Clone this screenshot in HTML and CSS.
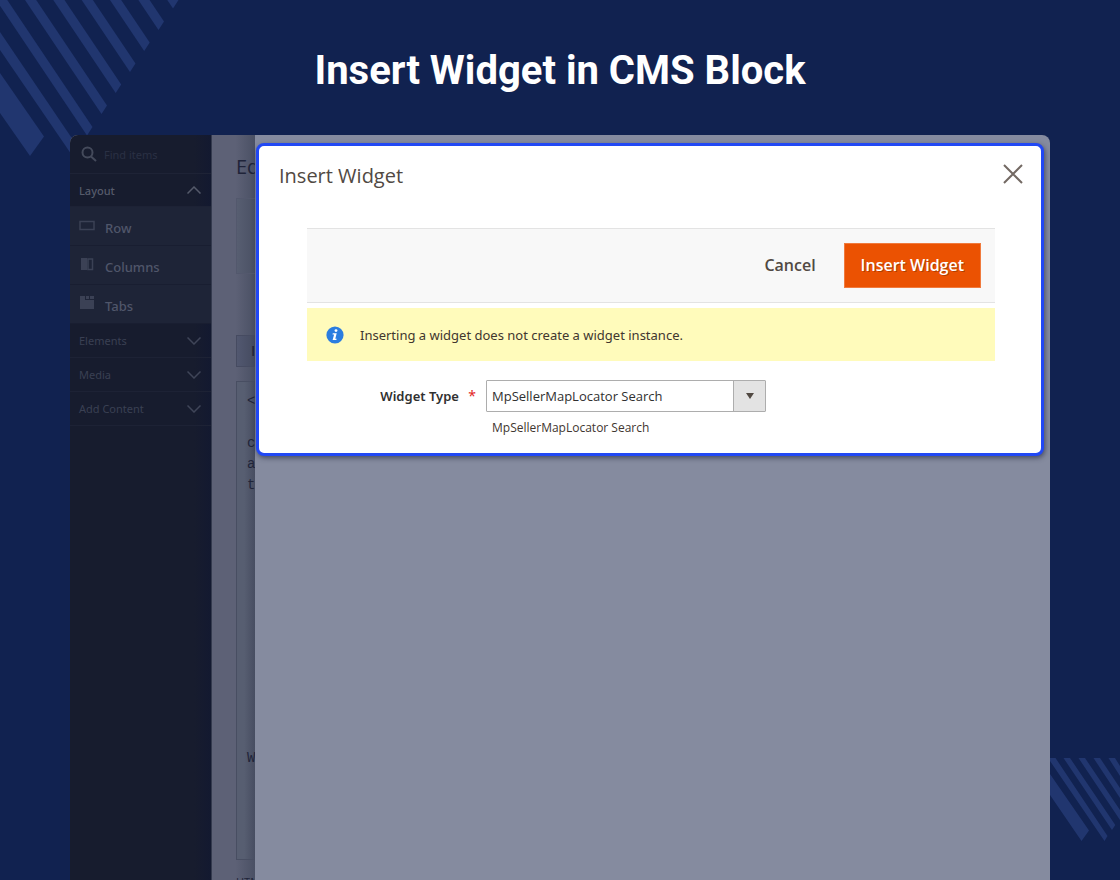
FILE: index.html
```html
<!DOCTYPE html>
<html lang="en">
<head>
<meta charset="utf-8">
<title>Insert Widget in CMS Block</title>
<link rel="stylesheet" href="styles.css">
</head>
<body>
<svg class="stripes stripes-top" viewBox="0 0 180 160" aria-hidden="true">
  <defs><path id="stripe" d="M0 0L-5.5 8.5L-105.5 -140.5L-100 -149Z"/></defs>
  <path d="M0 73L44 136.500L30 156L0 113Z"/>
  <path d="M0 32L78.500 148L72.500 156L0 50Z"/>
  <use href="#stripe" x="92.5" y="127"/>
  <use href="#stripe" x="107" y="105.5"/>
  <use href="#stripe" x="121.2" y="84.5"/>
  <use href="#stripe" x="135.500" y="63.500"/>
  <use href="#stripe" x="149.700" y="42.500"/>
  <use href="#stripe" x="164" y="21.500"/>
  <use href="#stripe" x="178.500" y="0"/>
</svg>
<svg class="stripes stripes-bottom" viewBox="0 0 70 84" aria-hidden="true">
  <path d="M0 16L39 72.5L31.5 83L0 37ZM0 0H5.500L57.500 78L54.500 83L0 3ZM13.500 0H20L65.300 67L62 72ZM28.500 0H35L70 52V62ZM43.500 0H50L70 30V40ZM58.500 0H65L70 8V18Z"/>
</svg>
<h1 class="headline">Insert Widget in CMS Block</h1>
<main class="frame">
  <aside class="sidebar">
    <div class="search">
      <svg width="16" height="16" viewBox="0 0 16 16" aria-hidden="true"><circle cx="6.500" cy="6.500" r="5" /><path d="M10 10.500L15 15"/></svg>
      <input class="search-input" type="text" placeholder="Find items" aria-label="Find items">
    </div>
    <button class="group group-open">Layout<svg width="14" height="8" viewBox="0 0 14 8" aria-hidden="true"><path d="M.5 7.500L7 1L13.500 7.500"/></svg></button>
    <button class="item"><svg width="16" height="16" viewBox="0 0 16 16" aria-hidden="true"><path class="line" d="M1 3.500H15V11.500H1Z"/></svg>Row</button>
    <button class="item"><svg width="16" height="16" viewBox="0 0 16 16" aria-hidden="true"><path class="solid" d="M2 1H8V13H2Z"/><path class="line" d="M9 2H13.500V12.500H9Z"/></svg>Columns</button>
    <button class="item"><svg width="16" height="16" viewBox="0 0 16 16" aria-hidden="true"><path class="solid" d="M1 0H6V4H15V13H1ZM7 0H10V3H7ZM11 0H15V3H11Z"/></svg>Tabs</button>
    <button class="group">Elements<svg width="14" height="8" viewBox="0 0 14 8" aria-hidden="true"><path d="M.5 .5L7 7L13.500 .5"/></svg></button>
    <button class="group">Media<svg width="14" height="8" viewBox="0 0 14 8" aria-hidden="true"><path d="M.5 .5L7 7L13.500 .5"/></svg></button>
    <button class="group">Add Content<svg width="14" height="8" viewBox="0 0 14 8" aria-hidden="true"><path d="M.5 .5L7 7L13.500 .5"/></svg></button>
  </aside>
  <section class="page">
    <h2 class="page-title">Ed</h2>
    <div class="page-bar"></div>
    <div class="page-button">I</div>
    <pre class="page-code">&lt;

c
a
t












W</pre>
    <div class="page-foot">HTML</div>
  </section>
  <section class="panel">
    <div class="modal" role="dialog" aria-labelledby="modal-title">
      <header class="modal-head">
        <h2 class="modal-title" id="modal-title">Insert Widget</h2>
        <button class="close" aria-label="Close"><svg width="20" height="20" viewBox="0 0 20 20" aria-hidden="true"><path d="M1 1L19 19M19 1L1 19"/></svg></button>
      </header>
      <div class="modal-body">
        <div class="toolbar">
          <button class="cancel">Cancel</button>
          <button class="insert">Insert Widget</button>
        </div>
        <div class="message">
          <svg width="18" height="18" viewBox="0 0 18 18" aria-hidden="true"><circle cx="9" cy="9" r="8.600" fill="#2b7de0"/><circle cx="10" cy="4.600" r="1.400" fill="#fff"/><path d="M6.800 7.200H10.700L9.300 12.700H10.700L10.300 14H6.600L8.100 8.500H6.500Z" fill="#fff"/></svg>
          <span>Inserting a widget does not create a widget instance.</span>
        </div>
        <div class="field">
          <label class="label" for="widget-type">Widget Type <span class="required">*</span></label>
          <div class="control">
            <div class="select-wrap">
              <select class="select" id="widget-type"><option>MpSellerMapLocator Search</option></select>
              <span class="arrow"><svg width="8" height="6" viewBox="0 0 8 6" aria-hidden="true"><path d="M0 0H8L4 6Z"/></svg></span>
            </div>
            <div class="note">MpSellerMapLocator Search</div>
          </div>
        </div>
      </div>
    </div>
  </section>
</main>
</body>
</html>
```

FILE: styles.css
```css
* { box-sizing: border-box; }
body {
  margin: 0;
  height: 100vh;
  display: flex;
  flex-direction: column;
  position: relative;
  overflow: hidden;
  background: #112250;
  font-family: "Open Sans", "Noto Sans", sans-serif;
}
button { font: inherit; border: 0; margin: 0; background: none; }
h1, h2 { margin: 0; }
.stripes { position: absolute; fill: #21366f; }
.stripes-top { top: 0; left: 0; width: 180px; height: 160px; }
.stripes-bottom { right: 0; top: 758px; width: 70px; height: 84px; }
.headline {
  padding: 41px 20px 34px;
  color: #fff;
  font: 700 40px/60px Roboto, sans-serif;
  text-align: center;
}
.frame {
  position: relative;
  flex: 1;
  min-height: 0;
  display: flex;
  margin: 0 70px;
  overflow: hidden;
  border-radius: 8px 8px 0 0;
  background: #858b9f;
}
.sidebar {
  flex: 0 0 142px;
  background: linear-gradient(to right, #171c2e 88%, #131930);
  border-right: 1px solid #343a4e;
  font-family: "Noto Sans", sans-serif;
}
.search {
  display: flex;
  align-items: center;
  gap: 7px;
  height: 39px;
  padding: 0 11px;
  border-bottom: 1px solid #1e2336;
}
.search svg { flex: none; fill: none; stroke: #444a5b; stroke-width: 2; }
.search-input {
  min-width: 0;
  width: 100%;
  padding: 0;
  border: 0;
  background: none;
  font: 11px "Noto Sans", sans-serif;
}
.search-input::placeholder { color: #2a3044; }
.group {
  display: flex;
  align-items: center;
  justify-content: space-between;
  width: 100%;
  height: 34px;
  padding: 0 10px 0 9px;
  border-bottom: 1px solid #1d2235;
  color: #3a4053;
  font-size: 11px;
}
.group-open { height: 33px; color: #565b6b; font-weight: 500; }
.group svg { fill: none; stroke: #3f4558; stroke-width: 1.5; }
.group-open svg { stroke: #555a6a; }
.item {
  display: flex;
  align-items: center;
  gap: 10px;
  width: 100%;
  height: 39px;
  padding: 4px 9px 0;
  border-bottom: 1px solid #191e31;
  background: #1e2437;
  color: #50566a;
  font-size: 13px;
  font-weight: 500;
}
.item svg { margin-bottom: 5px; }
.item .line { fill: none; stroke: #3b4155; stroke-width: 1.5; }
.item .solid { fill: #3b4155; }
.page {
  flex: 0 0 43px;
  display: flex;
  flex-direction: column;
  padding: 18px 0 0 24px;
  overflow: hidden;
  background: linear-gradient(to right, #5d6176 55%, #4a5064);
  color: #1f2439;
}
.page-title { font-size: 20px; font-weight: 400; line-height: 28px; }
.page-bar {
  flex: none;
  height: 76px;
  margin-top: 17px;
  border: 1px solid #53586d;
  border-right: 0;
  background: linear-gradient(to right, #575e71, #4a5064);
}
.page-button {
  flex: none;
  height: 32px;
  margin-top: 61px;
  padding-left: 14px;
  border: 1px solid #464b61;
  border-right: 0;
  background: linear-gradient(to right, #525870, #444a5f);
  font-size: 14px;
  font-weight: 600;
  line-height: 30px;
}
.page-code {
  flex: none;
  height: 479px;
  margin: 14px 0 0;
  padding: 9px 0 0 10px;
  border: 1px solid #484e62;
  border-right: 0;
  background: linear-gradient(to right, #575e71 40%, #474d61);
  font: 14px/21px "Liberation Mono", monospace;
}
.page-foot { margin-top: 14px; font-size: 11px; line-height: 16px; }
.panel { flex: 1; min-width: 0; padding: 8px 6px 0 1px; }
.modal {
  border: 3px solid #2148f4;
  border-radius: 8px;
  background: #fff;
  box-shadow: 1px 2px 5px rgba(30, 35, 60, .6);
}
.modal-head {
  display: flex;
  align-items: center;
  justify-content: space-between;
  height: 60px;
  padding: 0 18px 0 20px;
}
.modal-title { color: #514943; font-size: 20px; font-weight: 400; line-height: 28px; }
.close { display: flex; padding: 0 0 4px; }
.close svg { stroke: #736963; stroke-width: 2; fill: none; }
.modal-body { padding: 22px 46px 16px 48px; }
.toolbar {
  display: flex;
  align-items: flex-start;
  justify-content: flex-end;
  gap: 12px;
  height: 75px;
  padding: 14px 14px 0;
  border-top: 1px solid #e3e3e3;
  border-bottom: 1px solid #e3e3e3;
  background: #f8f8f8;
}
.cancel, .insert { height: 45px; padding: 0 16px 2px; font-size: 16px; font-weight: 600; }
.cancel { color: #514943; }
.insert { background: #eb5202; border: 1px solid #f07a3d; color: #fff; text-shadow: 1px 1px 0 rgba(0, 0, 0, .25); }
.message {
  display: flex;
  align-items: center;
  gap: 16px;
  height: 53px;
  margin-top: 5px;
  padding: 0 19px;
  background: #fffbbb;
  color: #41362f;
  font: 13px "Noto Sans", sans-serif;
}
.field { display: flex; gap: 10px; margin-top: 19px; }
.label {
  flex: 0 0 169px;
  text-align: right;
  color: #303030;
  font: 600 13px/32px "Noto Sans", sans-serif;
}
.required { margin-left: 6px; color: #e22626; font-weight: 400; font-size: 14px; }
.control { flex: 0 1 280px; }
.select-wrap { position: relative; height: 32px; }
.select {
  appearance: none;
  width: 100%;
  height: 32px;
  padding: 0 34px 0 5px;
  border: 1px solid #adadad;
  border-radius: 1px;
  background: #fff;
  color: #303030;
  font: 13px "Open Sans", sans-serif;
}
.arrow {
  position: absolute;
  inset: 1px 1px 1px auto;
  width: 32px;
  display: flex;
  align-items: center;
  justify-content: center;
  border-left: 1px solid #adadad;
  background: #e3e3e3;
  pointer-events: none;
}
.arrow svg { fill: #514943; }
.note { margin-top: 7px; padding-left: 6px; color: #41362f; font-size: 12px; line-height: 18px; }
```
